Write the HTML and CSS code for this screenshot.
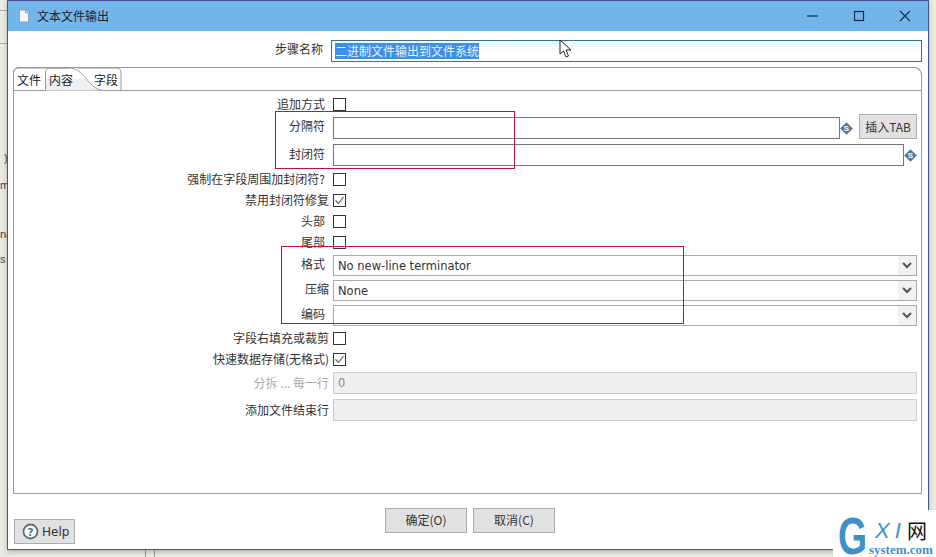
FILE: index.html
```html
<!DOCTYPE html>
<html lang="en">
<head>
  <meta charset="UTF-8">
  <meta name="viewport" content="width=device-width, initial-scale=1.0">
  <title>文本文件输出</title>
  <link rel="stylesheet" href="styles.css">
</head>
<body>
  <!-- bits of the window behind the dialog -->
  <div class="behind">
    <span class="bit bit-1">)</span>
    <span class="bit bit-2">m</span>
    <span class="bit bit-3">na</span>
    <span class="bit bit-4">s</span>
    <i class="rule rule-1"></i>
    <i class="rule rule-2"></i>
    <i class="stub"></i>
  </div>

  <div class="dialog">
    <div class="titlebar">
      <svg class="doc-icon" width="12" height="14" viewBox="0 0 12 14">
        <path d="M1.5 1h6l3 3v9h-9z" fill="#f4f8fc" stroke="#8fa6ba"/>
        <path d="M7.5 1v3h3" fill="#cfe0ee" stroke="#8fa6ba"/>
      </svg>
      <span class="title">文本文件输出</span>
      <div class="win-buttons">
        <svg width="12" height="12" viewBox="0 0 12 12"><path d="M0 6h11" stroke="#1c2c40" stroke-width="1.2"/></svg>
        <svg width="12" height="12" viewBox="0 0 12 12"><rect x="1.5" y="1.5" width="9" height="9" fill="none" stroke="#1c2c40" stroke-width="1.2"/></svg>
        <svg width="12" height="12" viewBox="0 0 12 12"><path d="M1 1l10 10M11 1L1 11" stroke="#1c2c40" stroke-width="1.1"/></svg>
      </div>
    </div>

    <div class="body">
      <div class="step-row">
        <label class="step-label">步骤名称</label>
        <div class="step-input"><span class="selected">二进制文件输出到文件系统</span></div>
      </div>

      <div class="tabs">
        <div class="tab-strip">
          <svg class="tab-lines" width="910" height="24" viewBox="0 0 910 24">
            <path d="M33 12h40c4 5 9 11 19 11.500H33z" fill="#f0f0f0"/>
            <path d="M.5 23.500V6q0-5 5-5H56" fill="none" stroke="#999"/>
            <path d="M32.500 23V5q0-4 5-4h18c8 0 12 4 18 11 6 7 10 11.500 18 11.500H108" fill="none" stroke="#999"/>
            <path d="M64 1h39q5 0 5 5v17" fill="none" stroke="#999"/>
          </svg>
          <span class="tab tab-file">文件</span>
          <span class="tab tab-content">内容</span>
          <span class="tab tab-field">字段</span>
        </div>

        <div class="panel">
          <div class="row row-check first">
            <label class="inset">追加方式</label><span class="check"></span>
          </div>
          <div class="row row-sep">
            <label class="inset">分隔符</label>
            <div class="field field-sep"></div>
            <svg class="var-icon" width="13" height="13" viewBox="0 0 13 13"><rect x="2" y="2" width="9" height="9" transform="rotate(45 6.500 6.500)" fill="#50789a"/><text x="6.500" y="9.300" text-anchor="middle" class="var-s">S</text></svg>
            <button class="btn btn-tab">插入TAB</button>
          </div>
          <div class="row row-enc">
            <label class="inset">封闭符</label>
            <div class="field field-enc"></div>
            <svg class="var-icon" width="13" height="13" viewBox="0 0 13 13"><rect x="2" y="2" width="9" height="9" transform="rotate(45 6.500 6.500)" fill="#50789a"/><text x="6.500" y="9.300" text-anchor="middle" class="var-s">S</text></svg>
          </div>
          <div class="row row-check gap-force">
            <label class="inset">强制在字段周围加封闭符?</label><span class="check"></span>
          </div>
          <div class="row row-check">
            <label>禁用封闭符修复</label>
            <span class="check"><svg width="11" height="11" viewBox="0 0 11 11"><path d="M1.500 5.500l3 3 5-6.500" fill="none" stroke="#555" stroke-width="1.100"/></svg></span>
          </div>
          <div class="row row-check">
            <label class="inset">头部</label><span class="check"></span>
          </div>
          <div class="row row-check">
            <label class="inset">尾部</label><span class="check"></span>
          </div>
          <div class="row row-select gap-format">
            <label class="inset">格式</label>
            <div class="select"><span>No new-line terminator</span><b class="arrow"><svg width="10" height="7" viewBox="0 0 10 7"><path d="M1 1l4 4 4-4" fill="none" stroke="#555" stroke-width="2"/></svg></b></div>
          </div>
          <div class="row row-select">
            <label>压缩</label>
            <div class="select"><span>None</span><b class="arrow"><svg width="10" height="7" viewBox="0 0 10 7"><path d="M1 1l4 4 4-4" fill="none" stroke="#555" stroke-width="2"/></svg></b></div>
          </div>
          <div class="row row-select">
            <label class="inset">编码</label>
            <div class="select"><span></span><b class="arrow"><svg width="10" height="7" viewBox="0 0 10 7"><path d="M1 1l4 4 4-4" fill="none" stroke="#555" stroke-width="2"/></svg></b></div>
          </div>
          <div class="row row-check gap-pad">
            <label>字段右填充或裁剪</label><span class="check"></span>
          </div>
          <div class="row row-check">
            <label>快速数据存储(无格式)</label>
            <span class="check"><svg width="11" height="11" viewBox="0 0 11 11"><path d="M1.500 5.500l3 3 5-6.500" fill="none" stroke="#555" stroke-width="1.100"/></svg></span>
          </div>
          <div class="row row-off">
            <label class="muted">分拆 ... 每一行</label>
            <div class="field-off"><span>0</span></div>
          </div>
          <div class="row row-off">
            <label>添加文件结束行</label>
            <div class="field-off"></div>
          </div>
        </div>
      </div>

      <div class="footer">
        <button class="btn btn-help">
          <svg width="17" height="17" viewBox="0 0 17 17"><circle cx="8.500" cy="8.500" r="7" fill="#fff" stroke="#56707f" stroke-width="1.800"/><text x="8.500" y="12.500" text-anchor="middle" class="help-q">?</text></svg>
          Help
        </button>
        <div class="actions">
          <button class="btn btn-main">确定(O)</button>
          <button class="btn btn-main">取消(C)</button>
        </div>
      </div>
    </div>
  </div>

  <!-- annotations drawn on the screenshot -->
  <div class="mark mark-1"></div>
  <div class="mark mark-2"></div>

  <svg class="cursor" width="14" height="20" viewBox="0 0 14 20">
    <path d="M1 1v14l3.500-3 2.500 6 2.500-1-2.500-6H12z" fill="#fff" stroke="#222" stroke-width="1"/>
  </svg>

  <div class="watermark">
    <span class="wm-g">G</span>
    <span class="wm-xi">XI</span>
    <span class="wm-net">网</span>
    <span class="wm-site">system.com</span>
  </div>
</body>
</html>
```

FILE: styles.css
```css
/* Reset and Base Styles */
* {
  margin: 0;
  padding: 0;
  box-sizing: border-box;
}

body {
  width: 936px;
  height: 557px;
  overflow: hidden;
  position: relative;
  background: #ebebe4;
  color: #333;
  font-family: "Noto Sans CJK SC", "Liberation Sans", sans-serif;
  font-size: 12px;
}

/* Window behind */
.behind .bit {
  position: absolute;
  left: 0;
  font-family: "Liberation Sans", sans-serif;
  font-size: 11px;
  color: #444;
}

.bit-1 { top: 152px; left: 4px !important; }
.bit-2 { top: 179px; }
.bit-3 { top: 228px; }
.bit-4 { top: 253px; }

.rule {
  position: absolute;
  left: 0;
  width: 7px;
  height: 1px;
  background: #aaa;
}

.rule-1 { top: 10px; }
.rule-2 { top: 43px; }

.stub {
  position: absolute;
  left: 145px;
  top: 549px;
  width: 10px;
  height: 8px;
  border-left: 1px solid #999;
  border-right: 1px solid #999;
}

/* Dialog */
.dialog {
  position: absolute;
  left: 7px;
  top: 0;
  width: 922px;
  height: 550px;
  background: #fff;
  border: 1px solid #47558f;
  box-shadow: 0 2px 5px rgba(0, 0, 0, 0.25);
  display: flex;
  flex-direction: column;
}

.titlebar {
  height: 30px;
  flex: none;
  background: #72b5ea;
  display: flex;
  align-items: center;
  padding-left: 10px;
  color: #222;
}

.doc-icon {
  margin-right: 7px;
}

.title {
  flex: 1;
  padding-bottom: 2px;
}

.win-buttons {
  display: flex;
  gap: 34px;
  padding-right: 17px;
}

.body {
  flex: 1;
  padding: 9px 6px 0 5px;
  display: flex;
  flex-direction: column;
}

/* Step name */
.step-row {
  display: flex;
  align-items: center;
  height: 22px;
}

.step-label {
  width: 310px;
  text-align: right;
  margin-right: 8px;
  padding-bottom: 5px;
}

.step-input {
  flex: 1;
  height: 22px;
  border: 1px solid #41707e;
  background: linear-gradient(#e4f9ff, #fff 60%);
  padding-left: 3px;
  display: flex;
  align-items: center;
}

.selected {
  background: #3c90ea;
  color: #e8f2fb;
  line-height: 16px;
}

/* Tabs */
.tabs {
  margin-top: 5px;
  height: 427px;
  position: relative;
  display: flex;
  flex-direction: column;
}

.tab-strip {
  height: 23px;
  flex: none;
  position: relative;
  display: flex;
  border: 1px solid #999;
  border-radius: 6px 8px 0 0;
  border-bottom: none;
}

.tab-lines {
  position: absolute;
  left: -1px;
  top: -1px;
}

.tab {
  position: relative;
  line-height: 23px;
  color: #222;
}

.tab-file { margin-left: 3px; width: 32px; }
.tab-content { width: 45px; }

.panel {
  flex: 1;
  border: 1px solid #999;
  padding-right: 4px;
}

.row {
  display: flex;
  align-items: center;
}

.row label {
  width: 315px;
  flex: none;
  text-align: right;
  margin-right: 4px;
  padding-bottom: 2px;
}

.row label.inset {
  padding-right: 4px;
}

.row-check { height: 21px; }
.row-check.first { margin-top: 3px; height: 20px; }
.gap-force { margin-top: 3px; }
.gap-format { margin-top: 2px; }
.row-select + .gap-pad { margin-top: -2px; }

.row-sep { height: 25px; }
.row-enc { height: 22px; margin-top: 5px; }
.row-select { height: 21px; margin-bottom: 4px; }
.row-off { height: 22px; margin-top: 5px; }
.row-check + .row-off { margin-top: 2px; }

.row-enc label,
.row-select label {
  padding-bottom: 4px;
}

.check {
  width: 13px;
  height: 13px;
  border: 1px solid #333;
  background: #fff;
  display: flex;
  align-items: center;
  justify-content: center;
}

.field {
  height: 22px;
  border: 1px solid #777;
  background: #fff;
}

.field-sep { width: 508px; align-self: flex-end; }
.field-enc { width: 571px; }

.var-icon {
  flex: none;
}

.row-sep .var-icon { margin-top: 3px; }

.var-s {
  font-family: "Liberation Sans", sans-serif;
  font-size: 8px;
  font-weight: bold;
  fill: #fff;
}

.select {
  flex: 1;
  height: 21px;
  border: 1px solid #aaa;
  background: #fff;
  display: flex;
  align-items: center;
  justify-content: space-between;
  padding-left: 4px;
  font-family: "DejaVu Sans", sans-serif;
  font-size: 11.500px;
  color: #333;
}

.arrow {
  width: 18px;
  height: 19px;
  background: #f1f1f1;
  display: flex;
  align-items: center;
  justify-content: center;
}

.row label.muted {
  color: #aaa;
}

.field-off {
  flex: 1;
  height: 22px;
  border: 1px solid #ccc;
  background: #efefef;
  padding-left: 4px;
  line-height: 21px;
  font-family: "DejaVu Sans", sans-serif;
  font-size: 11.500px;
  color: #888;
}

/* Buttons */
.btn {
  background: #e1e1e1;
  border: 1px solid #adadad;
  color: #333;
  font-family: "Noto Sans CJK SC", "DejaVu Sans", sans-serif;
  font-size: 12px;
}

.btn-tab {
  width: 58px;
  height: 25px;
  margin-left: 6px;
}

.btn-main {
  width: 82px;
  height: 25px;
  padding-bottom: 2px;
}

.btn-help {
  width: 61px;
  height: 25px;
  margin: 11px 0 0 1px;
  display: flex;
  align-items: center;
  gap: 3px;
  padding-left: 7px;
  font-family: "DejaVu Sans", sans-serif;
  justify-self: start;
  align-self: start;
}

.help-q {
  font-family: "DejaVu Sans", sans-serif;
  font-size: 11px;
  font-weight: bold;
  fill: #56707f;
}

.footer {
  display: grid;
  grid-template-columns: 1fr auto 1fr;
  padding-top: 14px;
}

.actions {
  display: flex;
  gap: 6px;
  margin-left: 5px;
}

/* Red boxes */
.mark {
  position: absolute;
  border: 1px solid #b5163a;
}

.mark-1 {
  left: 275px;
  top: 111px;
  width: 240px;
  height: 58px;
}

.mark-2 {
  left: 281px;
  top: 246px;
  width: 403px;
  height: 78px;
}

.cursor {
  position: absolute;
  left: 559px;
  top: 39px;
}

/* Watermark */
.watermark {
  position: absolute;
  left: 833px;
  top: 510px;
  width: 103px;
  height: 47px;
  background: #fff;
}

.wm-g {
  position: absolute;
  left: 5px;
  top: 6px;
  font-family: "Liberation Sans", sans-serif;
  font-size: 52px;
  line-height: 41px;
  font-weight: bold;
  color: #3f8fc9;
  transform: scaleX(0.72);
  transform-origin: left top;
}

.wm-xi {
  position: absolute;
  left: 42px;
  top: 10px;
  font-family: "Liberation Sans", sans-serif;
  font-size: 22px;
  line-height: 22px;
  letter-spacing: 5px;
  font-style: italic;
  color: #3f8fc9;
}

.wm-net {
  position: absolute;
  left: 74px;
  top: 10px;
  font-family: "Noto Sans CJK SC", sans-serif;
  font-size: 20px;
  line-height: 21px;
  color: #111;
}

.wm-site {
  position: absolute;
  left: 36px;
  top: 33px;
  font-family: "Liberation Serif", serif;
  font-size: 13px;
  line-height: 13px;
  font-weight: bold;
  color: #3f8fc9;
}
```
